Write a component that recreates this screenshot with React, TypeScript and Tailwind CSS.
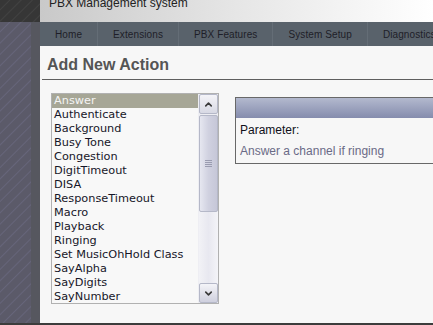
import { ChevronUp, ChevronDown } from 'lucide-react';

const actions = [
  'Answer',
  'Authenticate',
  'Background',
  'Busy Tone',
  'Congestion',
  'DigitTimeout',
  'DISA',
  'ResponseTimeout',
  'Macro',
  'Playback',
  'Ringing',
  'Set MusicOhHold Class',
  'SayAlpha',
  'SayDigits',
  'SayNumber',
];

const menu = ['Home', 'Extensions', 'PBX Features', 'System Setup', 'Diagnostics'];

export default function App() {
  return (
    <div className="w-[433px] h-[325px] flex flex-col overflow-hidden bg-[#3c3c3c]">
      <div className="flex flex-1 min-h-0">
        {/* striped side strip */}
        <div className="w-[40px] shrink-0 flex flex-col">
          <div className="h-[22px] bg-[#363636] bg-[repeating-linear-gradient(135deg,#363636_0px,#363636_6px,#424242_7px,#363636_8px)]" />
          <div className="flex-1 flex">
            <div className="w-[31px] bg-[#5b5a69] bg-[repeating-linear-gradient(135deg,#5b5a69_0px,#5b5a69_6px,#66657a_7px,#5b5a69_8px)]" />
            <div className="flex-1 bg-[#56575f]" />
          </div>
        </div>

        <div className="flex-1 flex flex-col min-w-0 bg-[#f7f7f7]">
          {/* top header */}
          <div className="h-[22px] bg-gradient-to-r from-[#c9c9c9] via-[#e6e6e6] to-white relative overflow-hidden">
            <span className="absolute left-[9px] top-[-6px] text-[12px] whitespace-nowrap text-[#222] font-['Liberation_Sans',Arial,sans-serif]">
              PBX Management system
            </span>
          </div>

          {/* nav */}
          <div className="h-[24px] bg-[#59626b] flex items-center whitespace-nowrap font-['Liberation_Sans',Arial,sans-serif] text-[10px] text-[#1e1e28]">
            {menu.map((m) => (
              <div key={m} className="h-full shrink-0 flex items-center px-[15px] border-r border-[#646d76] tracking-[0.1px]">
                {m}
              </div>
            ))}
          </div>

          {/* content */}
          <div className="flex-1 pl-[2px] overflow-hidden">
            <div className="border-b border-[#5f5f5f] pl-[5px] h-[34px] pt-[10px]">
              <h1 className="text-[16px] leading-[18px] font-bold text-[#555] font-['Liberation_Sans',Arial,sans-serif]">
                Add New Action
              </h1>
            </div>

            <div className="flex items-start mt-[13px] pl-[9px]">
              {/* list box */}
              <div className="w-[168px] h-[211px] shrink-0 border border-[#b1b1b1] bg-[#f8f8f8] flex">
                <div className="flex-1 font-['DejaVu_Sans',Verdana,sans-serif] text-[11.3px] text-[#161628]">
                  {actions.map((a, i) => (
                    <div
                      key={a}
                      className={
                        'h-[14px] leading-[14px] pl-[2px] whitespace-nowrap ' +
                        (i === 0 ? 'bg-[#a6a696] text-[#f4f4f4]' : '')
                      }
                    >
                      {a}
                    </div>
                  ))}
                </div>
                {/* scrollbar */}
                <div className="w-[20px] flex flex-col bg-[#eeeef3] pl-[1px]">
                  <div className="h-[20px] rounded-[2px] border border-[#b5b8c8] bg-gradient-to-b from-[#f4f4f8] to-[#d8d9e4] flex items-center justify-center">
                    <ChevronUp size={11} strokeWidth={3.5} className="text-[#3a3a3a]" />
                  </div>
                  <div className="h-[97px] mt-[1px] rounded-[2px] border border-[#b5b8c8] bg-gradient-to-r from-[#e6e7f0] via-[#d0d1e0] to-[#c6c7d8] flex items-center justify-center">
                    <div className="w-[7px] h-[7px] flex flex-col justify-between">
                      <div className="h-px bg-[#9a9cb0]" />
                      <div className="h-px bg-[#9a9cb0]" />
                      <div className="h-px bg-[#9a9cb0]" />
                      <div className="h-px bg-[#9a9cb0]" />
                    </div>
                  </div>
                  <div className="flex-1 bg-gradient-to-r from-[#f2f2f6] via-[#e8e8f0] to-[#f4f4f8]" />
                  <div className="h-[20px] rounded-[2px] border border-[#b5b8c8] bg-gradient-to-b from-[#f4f4f8] to-[#cfd0de] flex items-center justify-center">
                    <ChevronDown size={11} strokeWidth={3.5} className="text-[#3a3a3a]" />
                  </div>
                </div>
              </div>

              {/* parameter panel */}
              <div className="ml-[16px] mt-[4px] w-[240px] shrink-0 h-[67px] border border-[#686868] font-['Liberation_Sans',Arial,sans-serif] text-[12px]">
                <div className="h-[20px] bg-gradient-to-b from-[#b3b9ce] to-[#858cad]" />
                <div className="pl-[4px] pt-[5px] leading-[14px] text-[#10101a]">Parameter:</div>
                <div className="pl-[4px] pt-[7px] leading-[14px] text-[#6a6a86]">Answer a channel if ringing</div>
              </div>
            </div>
          </div>
        </div>
      </div>
      <div className="h-[2px] bg-[#3c3c3c]" />
    </div>
  );
}
